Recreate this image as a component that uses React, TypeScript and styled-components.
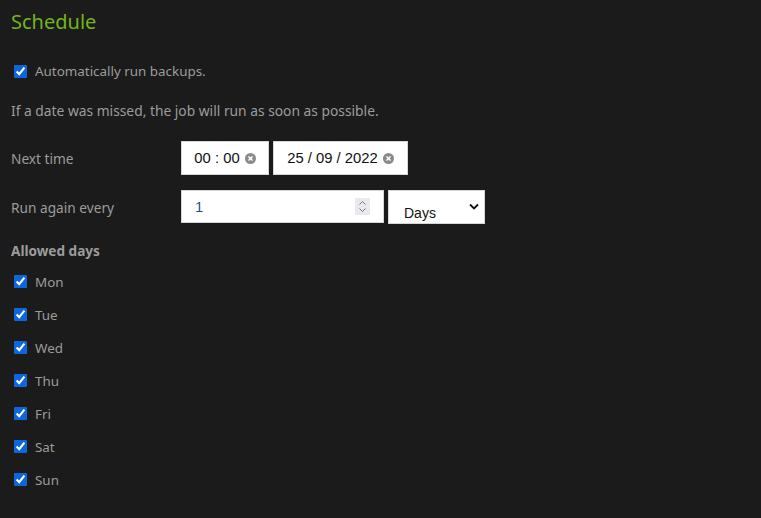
import React from "react";
import styled, { createGlobalStyle } from "styled-components";

const Global = createGlobalStyle`
  html, body { margin: 0; padding: 0; background: #1b1b1b; }
  body { font-family: "Noto Sans", "Open Sans", sans-serif; color: #9b9b9b; }
  * { box-sizing: border-box; }
`;

const Page = styled.div`
  width: 761px;
  height: 518px;
  background: #1b1b1b;
  padding: 8px 11px 0 11px;
  display: flex;
  flex-direction: column;
`;

const Title = styled.h1`
  margin: 0;
  font-size: 20px;
  font-weight: 400;
  color: #72b51c;
  line-height: 28px;
`;

const CheckRow = styled.label<{ $top?: number; $h?: number }>`
  display: flex;
  align-items: center;
  gap: 8px;
  height: ${(p) => p.$h ?? 33}px;
  margin-top: ${(p) => p.$top ?? 0}px;
  padding-left: 3px;
  font-size: 13.4px;
  color: #9b9b9b;
`;

const Box = styled.input.attrs({ type: "checkbox" })`
  width: 13px;
  height: 13px;
  margin: 0;
  accent-color: #0b66e0;
`;

const Note = styled.p`
  margin: 14px 0 0 0;
  font-size: 13.8px;
  line-height: 18px;
`;

const FormRow = styled.div<{ $top: number }>`
  display: flex;
  align-items: center;
  margin-top: ${(p) => p.$top}px;
`;

const Label = styled.div`
  width: 170px;
  font-size: 13.7px;
`;

const Fields = styled.div`
  display: flex;
  gap: 4px;
`;

const Field = styled.div<{ $w: number }>`
  width: ${(p) => p.$w}px;
  height: 34px;
  background: #fff;
  border: 1px solid #d6d6d6;
  display: flex;
  align-items: center;
  font-family: "Liberation Sans", Arial, sans-serif;
  font-size: 14.8px;
  color: #111;
`;

const TimeField = styled(Field)`
  justify-content: center;
  gap: 5px;
`;

const NumberField = styled(Field)`
  height: 33px;
  padding: 0 13px 0 13px;
  justify-content: space-between;
  color: #1b4fa8;
`;

const Spinner = styled.div`
  width: 15px;
  height: 17px;
  background: #e9e9ed;
  display: flex;
  align-items: center;
  justify-content: center;
`;

const SelectField = styled(Field)`
  align-items: flex-end;
  padding: 0 5px 2px 15px;
  justify-content: space-between;
  font-size: 14px;
`;

const Chevron = styled.svg`
  align-self: center;
  margin-top: 0px;
`;

const Heading = styled.div`
  margin-top: 18px;
  font-size: 13.6px;
  font-weight: 700;
  line-height: 18px;
`;

const Clear = () => (
  <svg width="11" height="11" viewBox="0 0 12 12">
    <circle cx="6" cy="6" r="6" fill="#8a8a8a" />
    <path d="M3.8 3.8 L8.2 8.2 M8.2 3.8 L3.8 8.2" stroke="#fff" strokeWidth="1.6" />
  </svg>
);

const days = ["Mon", "Tue", "Wed", "Thu", "Fri", "Sat", "Sun"];

export default function App() {
  return (
    <Page>
      <Global />
      <Title>Schedule</Title>
      <CheckRow $top={18} $h={34}>
        <Box defaultChecked />
        Automatically run backups.
      </CheckRow>
      <Note>If a date was missed, the job will run as soon as possible.</Note>
      <FormRow $top={21}>
        <Label>Next time</Label>
        <Fields>
          <TimeField $w={88}>
            <span>00 : 00</span>
            <Clear />
          </TimeField>
          <TimeField $w={135}>
            <span>25 / 09 / 2022</span>
            <Clear />
          </TimeField>
        </Fields>
      </FormRow>
      <FormRow $top={15}>
        <Label>Run again every</Label>
        <Fields>
          <NumberField $w={203}>
            <span>1</span>
            <Spinner>
              <svg width="9" height="13" viewBox="0 0 9 13">
                <path d="M1.5 4.5 L4.5 1.5 L7.5 4.5 M1.5 8.5 L4.5 11.5 L7.5 8.5" fill="none" stroke="#777" strokeWidth="1" />
              </svg>
            </Spinner>
          </NumberField>
          <SelectField $w={97}>
            <span>Days</span>
            <Chevron width="10" height="7" viewBox="0 0 10 7">
              <path d="M1 1.5 L5 5.5 L9 1.5" fill="none" stroke="#111" strokeWidth="1.8" />
            </Chevron>
          </SelectField>
        </Fields>
      </FormRow>
      <Heading>Allowed days</Heading>
      {days.map((d, i) => (
        <CheckRow key={d} $top={i === 0 ? 5 : 0}>
          <Box defaultChecked />
          {d}
        </CheckRow>
      ))}
    </Page>
  );
}
